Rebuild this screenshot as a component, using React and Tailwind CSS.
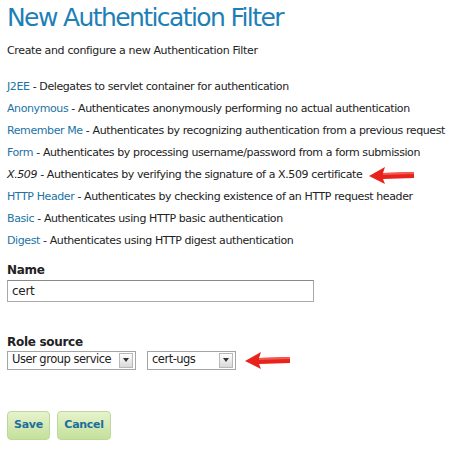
import React from "react";

const filters = [
  { name: "J2EE", desc: "Delegates to servlet container for authentication" },
  { name: "Anonymous", desc: "Authenticates anonymously performing no actual authentication" },
  { name: "Remember Me", desc: "Authenticates by recognizing authentication from a previous request" },
  { name: "Form", desc: "Authenticates by processing username/password from a form submission" },
  { name: "X.509", desc: "Authenticates by verifying the signature of a X.509 certificate", current: true },
  { name: "HTTP Header", desc: "Authenticates by checking existence of an HTTP request header" },
  { name: "Basic", desc: "Authenticates using HTTP basic authentication" },
  { name: "Digest", desc: "Authenticates using HTTP digest authentication" },
];

const Arrow = () => (
  <svg width="48" height="20" viewBox="0 0 48 20" className="block">
    <path d="M1 11 L17 2 L15 8 L46 7 L46 13 L15 14 L17 19 Z" fill="#e8231b" />
    <path d="M15 8 L46 7 L46 9 L15 10 Z" fill="#f25a50" />
  </svg>
);

const Select = ({ value, width }) => (
  <div className={`flex items-center h-[19px] border border-[#a5a5a5] bg-white whitespace-nowrap ${width}`}>
    <span className="flex-1 pl-[4px] text-[11.5px] leading-none text-[#222] tracking-[-0.5px]">{value}</span>
    <span className="flex items-center justify-center w-[14px] h-[15px] mr-[2px] bg-gradient-to-b from-white to-[#d8d8d8] border border-[#b8b8b8]">
      <span className="w-0 h-0 border-l-[3px] border-r-[3px] border-t-[4px] border-l-transparent border-r-transparent border-t-[#333]" />
    </span>
  </div>
);

export default function App() {
  return (
    <div className="w-[474px] h-[451px] bg-white px-[7px] pt-[2px] text-[#222]" style={{ fontFamily: '"DejaVu Sans", Verdana, sans-serif' }}>
      <h1 className="text-[25px] leading-[32px] text-[#1e7fb7] tracking-[-1.6px]">New Authentication Filter</h1>
      <p className="mt-[10px] text-[11px] leading-[14px] tracking-[-0.35px]">Create and configure a new Authentication Filter</p>

      <ul className="mt-[21px] flex flex-col gap-[7px] text-[11px] leading-[14px] tracking-[-0.4px]">
        {filters.map((f) => (
          <li key={f.name} className="flex items-center gap-[6px] whitespace-nowrap h-[15px]">
            <span>
              {f.current ? <i>{f.name}</i> : <a className="text-[#2173a6]">{f.name}</a>}
              {" - "}
              {f.desc}
            </span>
            {f.current && <Arrow />}
          </li>
        ))}
      </ul>

      <div className="mt-[15px]">
        <label className="block text-[12px] font-bold leading-[14px] tracking-[-0.3px]">Name</label>
        <div className="mt-[3px] w-[307px] h-[22px] border border-[#a9a9a9] border-t-[#8a8a8a] flex items-center pl-[4px] text-[12px] tracking-[-0.3px]">cert</div>
      </div>

      <div className="mt-[33px]">
        <label className="block text-[12px] font-bold leading-[14px] tracking-[-0.3px]">Role source</label>
        <div className="mt-[1px] flex items-center">
          <Select value="User group service" width="w-[129px]" />
          <div className="ml-[11px]"><Select value="cert-ugs" width="w-[89px]" /></div>
          <div className="ml-[8px]"><Arrow /></div>
        </div>
      </div>

      <div className="mt-[41px] flex gap-[7px]">
        <button className="h-[29px] w-[43px] rounded-[4px] border border-[#bcd89a] bg-gradient-to-b from-[#e6f3cd] to-[#c4e09a] text-[11px] font-bold text-[#1c6e9c] tracking-[-0.3px]">Save</button>
        <button className="h-[29px] w-[54px] rounded-[4px] border border-[#bcd89a] bg-gradient-to-b from-[#e6f3cd] to-[#c4e09a] text-[11px] font-bold text-[#1c6e9c] tracking-[-0.3px]">Cancel</button>
      </div>
    </div>
  );
}
